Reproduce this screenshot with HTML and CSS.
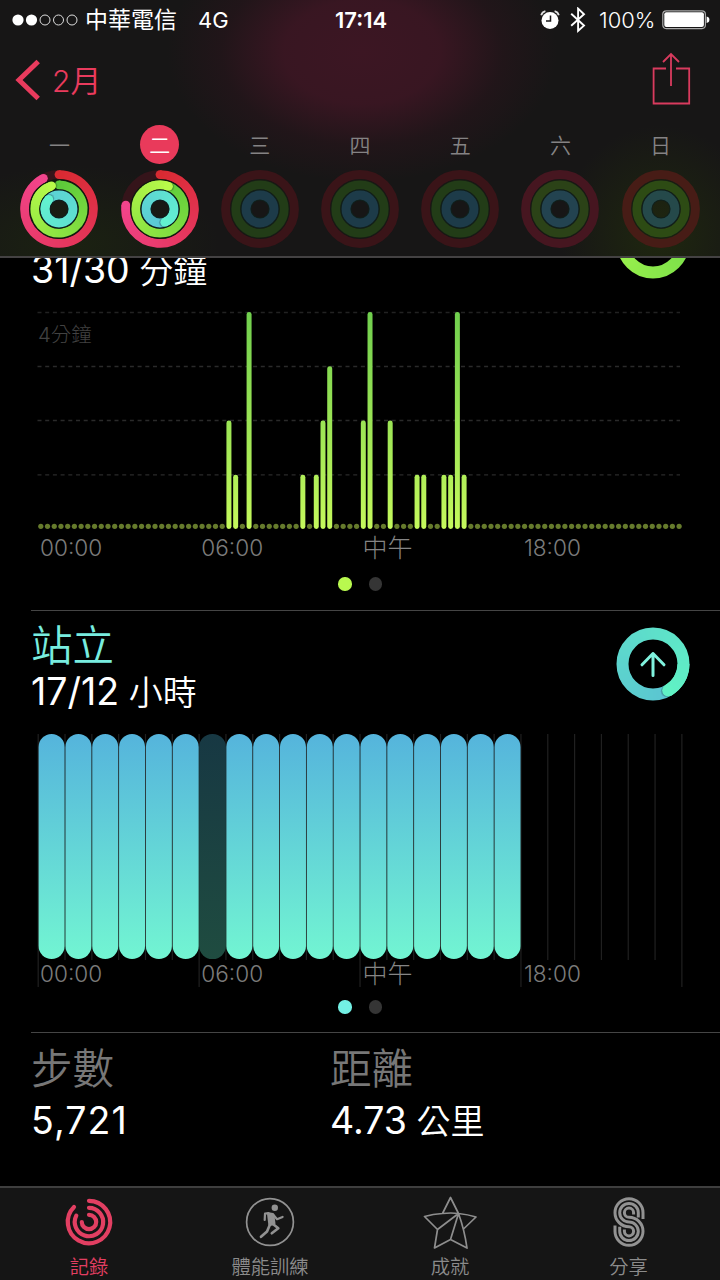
FILE: index.html
```html
<!DOCTYPE html>
<html lang="zh-Hant">
<head>
<meta charset="utf-8">
<title>活動記錄</title>
<link rel="stylesheet" href="styles.css">
</head>
<body>
<div class="screen">
  <header class="header">
    <div class="status">
      <svg class="signal" width="66" height="14" viewBox="0 0 66 14">
        <g fill="#fff"><circle cx="6" cy="7" r="5.6"/><circle cx="19.5" cy="7" r="5.6"/></g>
        <g fill="none" stroke="#ddd" stroke-width="1"><circle cx="33" cy="7" r="5"/><circle cx="46.5" cy="7" r="5"/><circle cx="60" cy="7" r="5"/></g>
      </svg>
      <span class="carrier">中華電信</span>
      <span class="network">4G</span>
      <span class="clock">17:14</span>
      <svg class="alarm" width="20" height="20" viewBox="0 0 20 20">
        <circle cx="10" cy="10.5" r="8.5" fill="#fff"/>
        <path d="M1.2 5.2Q2.2 2 5.4 1.2M18.8 5.2Q17.8 2 14.6 1.2" fill="none" stroke="#ddd" stroke-width="1.8"/>
        <path d="M10.5 5.5V11H6" fill="none" stroke="#191718" stroke-width="1.5"/>
      </svg>
      <svg class="bluetooth" width="16" height="26" viewBox="0 0 16 26">
        <path d="M1.2 6.8L14 18.6L8.1 23.8V1.6L14 7.2L1.2 18.8" fill="none" stroke="#fff" stroke-width="1.9"/>
      </svg>
      <span class="percent">100%</span>
      <svg class="battery" width="48" height="20" viewBox="0 0 48 20">
        <rect x=".8" y=".8" width="42.6" height="17.8" rx="3.5" fill="none" stroke="#aaa" stroke-width="1.2"/>
        <rect x="2.3" y="2.3" width="39.6" height="14.8" rx="2" fill="#fff"/>
        <path d="M44.6 6.5Q47.4 7 47.4 9.7T44.6 13Z" fill="#fff"/>
      </svg>
    </div>
    <nav class="nav">
      <a class="back">
        <svg width="26" height="42" viewBox="0 0 26 42"><path d="M23.2 2.5L4 21L23.2 39.5" fill="none" stroke="#e93b5d" stroke-width="5"/></svg>
        <span class="back-label"><span class="lat">2</span>月</span>
      </a>
      <svg class="share" width="40" height="54" viewBox="0 0 40 54">
        <path d="M15 16.5H2.6V51.5H38.2V16.5H25M20 34V2M12 10L20 2L28 10" fill="none" stroke="#d93b5e" stroke-width="1.8"/>
      </svg>
    </nav>
    <div class="days">
      <div class="day"><span>一</span></div>
      <div class="day"><span class="today">二</span></div>
      <div class="day"><span>三</span></div>
      <div class="day"><span>四</span></div>
      <div class="day"><span>五</span></div>
      <div class="day"><span>六</span></div>
      <div class="day"><span>日</span></div>
    </div>
    <div class="week-rings" id="week"></div>
  </header>

  <main class="content">
    <section class="panel exercise">
      <div class="value"><span class="lat">31/30</span> <span class="unit">分鐘</span></div>
      <svg class="badge" id="exercise-badge" width="76" height="76" viewBox="-38 -38 76 76"></svg>
      <div class="chart">
        <svg id="exercise-chart" width="644" height="235" viewBox="38 300 644 235"></svg>
        <span class="scale">4分鐘</span>
      </div>
      <div class="axis"><span>00:00</span><span>06:00</span><span class="noon">中午</span><span>18:00</span></div>
      <div class="pager"><i class="dot dot-green"></i><i class="dot"></i></div>
    </section>
    <section class="panel stand">
      <h2 class="title title-stand">站立</h2>
      <div class="value"><span class="lat">17/12</span> <span class="unit">小時</span></div>
      <svg class="badge" id="stand-badge" width="76" height="76" viewBox="-38 -38 76 76"></svg>
      <div class="chart">
        <svg id="stand-chart" width="644" height="231" viewBox="38 730 644 231"></svg>
      </div>
      <div class="axis"><span>00:00</span><span>06:00</span><span class="noon">中午</span><span>18:00</span></div>
      <div class="pager"><i class="dot dot-cyan"></i><i class="dot"></i></div>
    </section>
    <section class="panel totals">
      <div class="total"><h2 class="title">步數</h2><div class="value steps"><span class="lat">5,721</span></div></div>
      <div class="total"><h2 class="title">距離</h2><div class="value"><span class="lat">4.73</span> <span class="unit">公里</span></div></div>
    </section>
  </main>

  <footer class="tabs">
    <a class="tab active">
      <svg width="54" height="54" viewBox="-27 -27 54 54" fill="none" stroke="#e23f62" stroke-width="4.2" stroke-linecap="round">
        <path d="M0-21.2A21.2 21.2 0 1 1-15-15"/><path d="M0-14.2A14.2 14.2 0 1 1-12.7-6.4"/><path d="M0-7.2A7.2 7.2 0 1 1-7.2 0"/>
      </svg>
      <span>記錄</span>
    </a>
    <a class="tab">
      <svg width="54" height="54" viewBox="-27 -27 54 54" fill="none" stroke="#929292" stroke-linecap="round" stroke-linejoin="round">
        <circle r="23.4" stroke-width="1.7"/>
        <circle cx="4.8" cy="-14.3" r="3.2" fill="#929292" stroke="none"/>
        <path d="M-1.5-8.3L2.8-7.5L4 1.5L-.2 2.5Z" fill="#929292" stroke-width="3"/>
        <path d="M-1.5-8.8L-5-8.3L-5.3-2M3.5-7L7-2.8L12.6-5" stroke-width="2.2"/>
        <path d="M0 2.5L-3 9.5L-9 14.8M3.5 2.5L8.3 6.2L1.8 11.2" stroke-width="2.7"/>
      </svg>
      <span>體能訓練</span>
    </a>
    <a class="tab">
      <svg width="54" height="54" viewBox="-27 -27 54 54" fill="none" stroke="#8e8e8e" stroke-width="1.7" stroke-linejoin="round">
        <path d="M-7.5-8.5L.5-24.5L8.5-8.5M-7.5-8.5Q-17-8-25.5-5.5L-12.5 7.5L-15.5 26L.5 17.5L17 26Q14.5 8 8.5-8.5Q1-9.5-7.5-8.5M8.5-8.5Q18-7.5 26-5L13.5 7M8.5-8.5L-12.5 7.5M8.5-8.5L.5 17.5"/>
      </svg>
      <span>成就</span>
    </a>
    <a class="tab">
      <svg width="54" height="54" viewBox="-27 -27 54 54" fill="none" stroke="#929292" stroke-width="3">
        <path d="M14-3V-9.3A14 14 0 1 0 0 4.7A4.6 4.6 0 1 1-4.6 9.3V7.5"/>
        <path d="M9.3-4.5V-9.3A9.3 9.3 0 1 0 0 0A9.3 9.3 0 1 1-9.3 9.3V4.8"/>
        <path d="M4.6-7.5V-9.3A4.6 4.6 0 1 0 0-4.7A14 14 0 1 1-14 9.3V3.5"/>
      </svg>
      <span>分享</span>
    </a>
  </footer>
</div>
<script src="app.js"></script>
</body>
</html>
```
FILE: styles.css
```css
* { box-sizing: border-box; }
body { margin: 0; background: #000; }
.screen {
  width: 720px; height: 1280px; overflow: hidden;
  display: flex; flex-direction: column;
  background: #000; color: #fff;
  font-family: Inter, "Noto Sans CJK TC", sans-serif;
  font-weight: 350;
}
svg { display: block; flex: none; }
.header {
  height: 258px; flex: none;
  border-bottom: 2px solid #444243;
  background:
    radial-gradient(ellipse 100px 110px at 660px 235px, rgba(38, 56, 8, .5), transparent),
    radial-gradient(ellipse 150px 80px at 70px 245px, rgba(32, 48, 12, .45), transparent),
    radial-gradient(ellipse 195px 130px at 362px 52px, #3c1623 0, rgba(60, 22, 35, .9) 40%, rgba(48, 20, 30, .4) 72%, transparent 100%),
    #171616;
}
.status { height: 40px; padding-left: 12px; display: flex; align-items: center; white-space: nowrap; }
.status span { line-height: 30px; font-size: 22px; }
.signal { margin-right: 7px; }
.status .carrier { width: 113px; font-size: 23px; font-weight: 400; }
.network { width: 137px; font-weight: 400; }
.status .clock { width: 205px; font-weight: 600; }
.bluetooth { margin-left: 10px; }
.percent { margin-left: 13px; width: 63px; }
.nav { height: 84px; display: flex; justify-content: space-between; padding: 0 29px 0 15px; }
.back { display: flex; margin-top: 19px; color: #e93b5d; }
.back-label { margin-left: 11px; line-height: 44px; font-size: 31px; }
.back-label .lat { font-size: 30px; }
.share { margin-top: 12px; }
.days, .week-rings { display: grid; grid-template-columns: repeat(7, 100.2px); padding-left: 9.4px; }
.day { height: 40px; display: flex; justify-content: center; align-items: center; color: #858384; font-size: 21px; }
.day span { width: 39px; height: 39px; line-height: 41px; text-align: center; }
.day .today { background: #e93a5b; color: #fff; border-radius: 50%; }
.week-rings { margin-top: 5px; justify-items: center; }
.content { flex: none; height: 928px; overflow: hidden; }
.panel { position: relative; margin-left: 31px; border-bottom: 1px solid #454545; }
.exercise { height: 353px; padding-top: .1px; }
.exercise .value { margin-top: -11px; }
.exercise .chart { margin-top: 7px; }
.stand { height: 422px; padding-top: 12px; }
.stand .chart { margin-top: 15px; }
.title { margin: 0; height: 46px; line-height: 46px; font-size: 41.5px; font-weight: 350; color: #777; }
.title-stand { color: #78ecdf; }
.value { height: 46px; line-height: 46px; font-size: 37.5px; white-space: nowrap; }
.value .lat { font-weight: 400; }
.steps { letter-spacing: 1.1px; }
.unit { font-size: 34px; margin-left: -1px; }
.badge { position: absolute; right: 29px; }
.exercise .badge { top: -54px; }
.stand .badge { top: 15px; }
.chart { position: relative; margin-left: 7px; }
.chart svg { overflow: visible; }
.scale { position: absolute; left: 0; top: 23px; line-height: 24px; font-size: 20.4px; font-weight: 300; color: #424242; }
.axis { display: grid; grid-template-columns: repeat(4, 161.3px); margin-left: 9px; height: 24px; line-height: 26px; font-size: 22.6px; color: #7b7b7b; }
.noon { font-size: 25px; font-weight: 300; color: #858585; }
.pager { display: flex; justify-content: center; gap: 17px; margin: 18px 31px 0 0; }
.stand .pager { margin-top: 15px; }
.dot { width: 13.5px; height: 13.5px; border-radius: 50%; background: #353535; }
.dot-green { background: #b9f94f; }
.dot-cyan { background: #73f0e4; }
.totals { display: grid; grid-template-columns: 299px 1fr; padding-top: 13px; border: 0; }
.totals .value { margin-top: 6px; }
.tabs { flex: none; height: 94px; border-top: 2px solid #3e3e3e; background: #151515; display: grid; grid-template-columns: 178px 184px 176px 181px; }
.tab { display: flex; flex-direction: column; align-items: center; padding-top: 7px; color: #8b8b8b; font-size: 19.3px; }
.tab span { line-height: 28px; margin-top: 4px; }
.tab.active { color: #e23f62; }
```
FILE: app.js
```js
const RED = [[217, 42, 50], [242, 68, 140]];
const GREEN = [[92, 202, 58], [184, 250, 74]];
const BLUE = [[86, 178, 216], [98, 242, 208]];

const point = (r, deg) => {
  const a = (deg - 90) * Math.PI / 180;
  return (r * Math.cos(a)).toFixed(4) + ' ' + (r * Math.sin(a)).toFixed(4);
};
const mix = (c, t) => 'rgb(' + c[0].map((v, i) => Math.round(v + (c[1][i] - v) * t)).join() + ')';
const circleAt = (r, deg, radius, fill) => {
  const [x, y] = point(r, deg).split(' ');
  return `<circle cx="${x}" cy="${y}" r="${radius}" fill="${fill}"/>`;
};

let maskCount = 0;

// Coloured slices between two angles, trimmed to a smooth band by a mask.
function band(r, width, from, to, end, colors) {
  const id = 'band' + maskCount++;
  const large = to - from > 180 ? 1 : 0;
  const shape = to - from >= 359.9
    ? `<circle r="${r}" fill="none" stroke="#fff" stroke-width="${width}"/>`
    : `<path d="M${point(r, from)}A${r} ${r} 0 ${large} 1 ${point(r, to)}" fill="none" stroke="#fff" stroke-width="${width}"/>`;
  let out = `<mask id="${id}" maskUnits="userSpaceOnUse" x="-40" y="-40" width="80" height="80">${shape}</mask><g mask="url(#${id})">`;
  const outer = r + width;
  for (let a = from; a < to; a += 3) {
    out += `<path d="M0 0L${point(outer, a)}L${point(outer, Math.min(to, a + 4))}Z" shape-rendering="crispEdges" fill="${mix(colors, a / end)}"/>`;
  }
  return out + '</g>';
}

// Progress arc drawn clockwise from the top; colour runs along its length.
function ring(r, width, amount, colors) {
  const end = amount * 360;
  let out = amount < 1 ? circleAt(r, 0, width / 2, mix(colors, 0)) : '';
  out += band(r, width, Math.max(0, end - 360), end, end, colors);
  if (amount > 0.94) {
    out += circleAt(r, end + 90 / r, width / 2, 'rgba(0,0,0,.14)') + circleAt(r, end + 45 / r, width / 2, 'rgba(0,0,0,.14)');
    out += band(r, width, end - 60, end, end, colors);
  }
  return out + circleAt(r, end, width / 2, mix(colors, 1));
}
const hoop = (r, w, c) => `<circle r="${r}" fill="none" stroke="${c}" stroke-width="${w}"/>`;

const week = [[0.925, 0.95, 1.87], [0.768, 1.057, 1.444], null, null, null, null, null];
const idle = [0, 0, ['#3a1418', '#223c17', '#1d3b49'], ['#3a1418', '#223c17', '#1d3b49'],
  ['#3a1418', '#223c17', '#1d3b49'], ['#461620', '#2b4217', '#234350'], ['#471c16', '#2d4b14', '#25494a']];
document.getElementById('week').innerHTML = week.map((d, i) => {
  const body = d
    ? hoop(34.4, 9, '#35141a') + ring(34.4, 8.8, d[0], RED) + hoop(24.2, 11, '#101a0e') + ring(24.2, 8.8, d[1], GREEN) +
      hoop(14, 10.8, '#0d2023') + ring(14, 8.8, d[2], BLUE)
    : hoop(34.4, 9, idle[i][0]) + hoop(24.2, 10.6, '#181d14') + hoop(24.2, 8.8, idle[i][1]) +
      hoop(14, 10.8, '#10201c') + hoop(14, 8.8, idle[i][2]);
  return `<svg width="80" height="80" viewBox="-40 -40 80 80">${body}</svg>`;
}).join('');

document.getElementById('exercise-badge').innerHTML = ring(30.5, 12, 1.033, [[104, 214, 72], [176, 252, 78]]);
document.getElementById('stand-badge').innerHTML = ring(30.5, 12, 1.417, [[88, 178, 216], [96, 242, 196]]) +
  '<path d="M0 11.5V-10.5M-11 .8L0-10.5L11 .8" fill="none" stroke="#80f2de" stroke-width="3" stroke-linecap="round" stroke-linejoin="round"/>';

// Minutes of exercise per quarter hour.
const minutes = { 28: 2, 29: 1, 31: 4, 39: 1, 41: 1, 42: 2, 43: 3, 48: 2, 49: 4, 52: 2, 56: 1, 57: 1, 60: 1, 61: 1, 62: 4, 63: 1 };
let ex = '<defs><linearGradient id="lime" gradientUnits="userSpaceOnUse" x1="0" y1="312" x2="0" y2="529"><stop stop-color="#70cf4e"/><stop offset="1" stop-color="#c5f95c"/></linearGradient></defs>';
for (const y of [312.5, 366.5, 420.5, 474.8]) {
  ex += `<path d="M37.5 ${y}H680" stroke="${y < 320 ? '#222' : '#2a2a2a'}" stroke-width="1.3" stroke-dasharray="4 3.7"/>`;
}
for (let i = 0; i < 96; i++) {
  const x = 40.8 + i * 6.719;
  if (minutes[i]) {
    const top = 529 - minutes[i] * 54.25;
    ex += `<rect x="${x - 2.5}" y="${top}" width="5" height="${529 - top}" rx="2.4" fill="url(#lime)"/>`;
  } else {
    ex += `<circle cx="${x}" cy="526.3" r="2.6" fill="#667b2c"/>`;
  }
}
document.getElementById('exercise-chart').innerHTML = ex;

// One capsule per hour; hour 6 was missed.
let st = '<defs><linearGradient id="aqua" gradientUnits="userSpaceOnUse" x1="0" y1="734" x2="0" y2="959"><stop stop-color="#55b4dc"/><stop offset="1" stop-color="#72f5d2"/></linearGradient>' +
  '<linearGradient id="missed" x1="0" y1="0" x2="0" y2="1"><stop stop-color="#173843"/><stop offset="1" stop-color="#1f4c40"/></linearGradient></defs>';
for (let i = 0; i <= 24; i++) {
  st += `<path d="M${38.2 + i * 26.82} 734V${i % 6 ? 960 : 987}" stroke="#202020" stroke-width="1.2"/>`;
}
for (let i = 0; i < 18; i++) {
  const x = 38.2 + i * 26.82;
  st += i === 6
    ? `<rect x="${x}" y="734" width="26.8" height="225" rx="13.2" fill="url(#missed)"/>`
    : `<rect x="${x + 0.4}" y="734" width="26" height="225" rx="13" fill="url(#aqua)"/>`;
}
document.getElementById('stand-chart').innerHTML = st;
```
